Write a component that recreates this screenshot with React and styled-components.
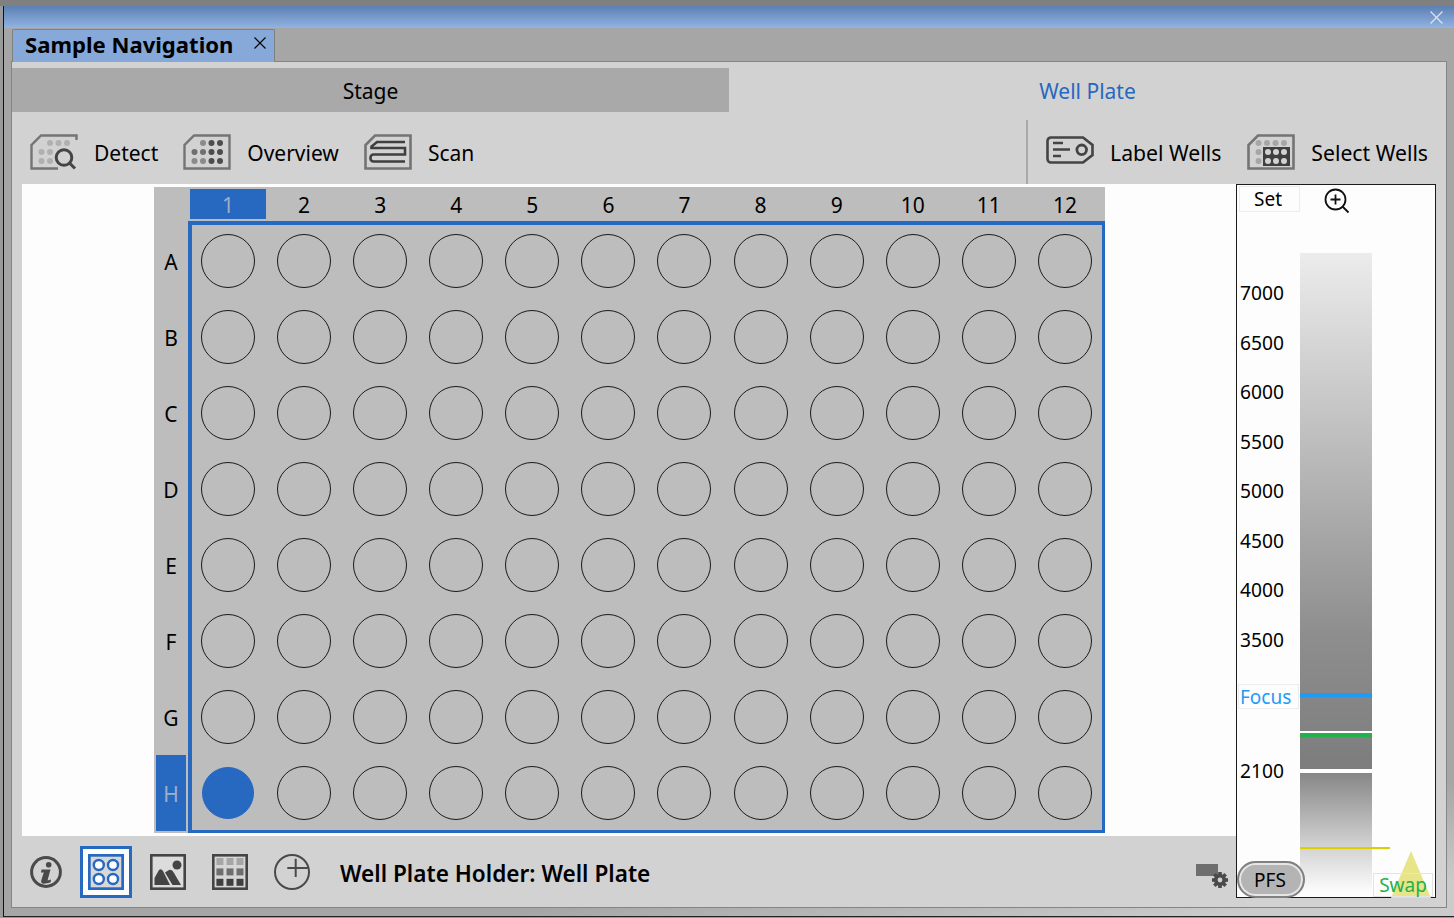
import React from "react";
import styled, { createGlobalStyle } from "styled-components";

const Global = createGlobalStyle`
  html, body { margin: 0; padding: 0; background: #808080; }
  * { box-sizing: border-box; }
  #root { width: 1454px; height: 918px; overflow: hidden; }
`;

const Screen = styled.div`
  width: 1454px; height: 918px; padding-top: 6px; padding-left: 3px;
  background: linear-gradient(#808080 6px, #9a9a9a 6px);
  font-family: "Noto Sans", "Open Sans", sans-serif;
  color: #000;
`;
const Win = styled.div`
  width: 1451px; height: 911px; display: flex; flex-direction: column;
  border-left: 1px solid #111; border-bottom: 1px solid #222;
  background: linear-gradient(172deg, #a6a6a6 88%, #cbcbcb 97%);
`;
const TitleBar = styled.div`
  height: 22px; flex: none; display: flex; justify-content: flex-end; align-items: center;
  padding-right: 11px;
  background: linear-gradient(#5d80b3, #91b3e2);
`;
const Dock = styled.div`
  flex: 1; display: flex; flex-direction: column; padding: 1px 7px 8px 7px;
`;
const TabStrip = styled.div`
  height: 32px; flex: none; display: flex; padding-left: 1px;
`;
const DocTab = styled.div`
  width: 263px; height: 33px; background: #86a9d9; border: 1px solid #808080; border-bottom: none;
  border-radius: 2px 2px 0 0; display: flex; align-items: center; justify-content: space-between;
  padding: 0 8px 4px 12px; font-size: 22.1px; font-weight: 700; position: relative; z-index: 1;
`;
const CloseMark = styled.span`
  display: flex; margin-bottom: 2px;
`;
const Panel = styled.div`
  flex: 1; display: flex; flex-direction: column; background: #d2d2d2;
  border: 1px solid #858585; padding-top: 6px;
`;
const ModeTabs = styled.div`
  height: 44px; flex: none; display: grid; grid-template-columns: 717px 1fr;
`;
const ModeTab = styled.div`
  display: flex; align-items: center; justify-content: center; font-size: 21px; padding-top: 2px;
  background: ${p => (p.$active ? "transparent" : "#a9a9a9")};
  color: ${p => (p.$active ? "#2668c0" : "#000")};
`;
const Toolbar = styled.div`
  height: 72px; flex: none; display: flex; justify-content: space-between; padding: 8px 18px 0 18px;
`;
const ToolGroup = styled.div`
  display: flex; align-items: center; gap: 25px; height: 64px; font-size: 21px;
`;
const RightTools = styled(ToolGroup)`
  border-left: 2px solid #aaaaaa; padding-left: 18px; gap: 26px; font-size: 21.2px;
`;
const Tool = styled.div`
  display: flex; align-items: center; gap: 16px; line-height: 1;
`;
const ToolText = styled.span`
  padding-top: 2px;
`;
const Work = styled.div`
  flex: 1; display: flex; padding-left: 10px; min-height: 0;
`;
const LeftCol = styled.div`
  width: 1214px; display: flex; flex-direction: column;
`;
const Canvas = styled.div`
  height: 652px; flex: none; background: #fdfdfd; display: flex; padding: 3px 0 0 132px;
`;
const Plate = styled.div`
  width: 951px; height: 646px; background: #bdbdbd; display: grid;
  grid-template-columns: 34px 917px; grid-template-rows: 34px 612px;
`;
const Corner = styled.div``;
const ColHead = styled.div`
  display: grid; grid-template-columns: repeat(12, 76.09px); padding: 2px 0 0 2px;
`;
const ColLabel = styled.div`
  display: flex; align-items: center; justify-content: center; font-size: 21px; height: 30px; padding-top: 2px;
  background: ${p => (p.$on ? "#2768c0" : "transparent")};
  color: ${p => (p.$on ? "#9eaec8" : "#000")};
`;
const RowHead = styled.div`
  display: grid; grid-template-rows: repeat(8, 76px); padding: 2px 0 0 2px;
`;
const RowLabel = styled.div`
  display: flex; align-items: center; justify-content: center; font-size: 21px; width: 30px; padding-top: 2px;
  background: ${p => (p.$on ? "#2768c0" : "transparent")};
  color: ${p => (p.$on ? "#9eaec8" : "#000")};
`;
const Wells = styled.div`
  border: 4px solid #2768c0; border-width: 4px 3px 3px 4px; display: grid;
  grid-template-columns: repeat(12, 76.09px); grid-template-rows: repeat(8, 76px);
`;
const WellCell = styled.div`
  display: flex; align-items: center; justify-content: center; padding: 0 4.1px 4px 0;
`;
const Well = styled.div`
  width: ${p => (p.$on ? 52 : 54)}px; height: ${p => (p.$on ? 52 : 54)}px; flex: none; border-radius: 50%;
  border: 1px solid ${p => (p.$on ? "#2768c0" : "#1a1a1a")};
  background: ${p => (p.$on ? "#2768c0" : "transparent")};
`;
const BottomBar = styled.div`
  flex: 1; display: flex; align-items: center; padding-left: 8px; position: relative;
`;
const BarIcon = styled.div`
  display: flex; flex: none; margin-right: ${p => p.$gap}px;
`;
const SelectedIcon = styled(BarIcon)`
  width: 52px; height: 52px; align-items: center; justify-content: center;
  background: #fdfdfd; border: 3px solid #2768c0;
`;
const Holder = styled.div`
  font-size: 22.6px; font-weight: 600; padding-top: 4px; color: #000;
`;
const GearWrap = styled.div`
  position: absolute; left: 1174px; top: 28px; width: 34px; height: 26px; display: flex;
`;
const Gauge = styled.div`
  width: 200px; height: 714px; flex: none; background: #fdfdfd; border: 1px solid #1c1c1c; position: relative;
`;
const SetBtn = styled.div`
  position: absolute; left: 2px; top: 1px; width: 61px; height: 26px; background: #fdfdfd; border: 1px solid #ececec;
  display: flex; align-items: center; justify-content: center; font-size: 19px; padding-right: 3px;
`;
const Zoom = styled.div`
  position: absolute; left: 87px; top: 3px; width: 26px; height: 26px; display: flex;
`;
const Bar = styled.div`
  position: absolute; left: 63px; top: 68px; width: 72px; height: 644px;
  background: linear-gradient(#ececec 0, #8e8e8e 380px, #7d7d7d 516px, #fff 516px, #fff 520px, #878787 520px, #cfcfcf 590px, #fdfdfd 640px);
`;
const Ticks = styled.div`
  position: absolute; left: 3px; top: 83px; display: flex; flex-direction: column; font-size: 19.2px;
`;
const Tick = styled.div`
  height: 49.5px; line-height: 49.5px;
`;
const Mark = styled.div`
  position: absolute; left: 63px; top: ${p => p.$top}px; width: ${p => p.$w || 72}px; height: ${p => p.$h}px; background: ${p => p.$c};
`;
const LowTick = styled.div`
  position: absolute; left: 3px; top: 572px; font-size: 19.2px; line-height: 28px;
`;
const FocusBox = styled.div`
  position: absolute; left: 1px; top: 499px; width: 61px; height: 25px; border: 1px solid #ececec; background: #fdfdfd;
  color: #1e9bf5; font-size: 19px; line-height: 25px; padding-left: 1px;
`;
const SwapBox = styled.div`
  position: absolute; left: 136px; top: 688px; width: 60px; height: 24px; border: 1px solid #e4e4e4;
  color: #22b14c; font-size: 19px; line-height: 22px; text-align: center;
`;
const Tri = styled.svg`
  position: absolute; left: 154px; top: 666px;
`;
const Pfs = styled.div`
  position: absolute; left: 0; top: 676px; width: 68px; height: 37px; border-radius: 19px;
  background: #b4b4b4; border: 2px solid #808080; box-shadow: inset 0 0 0 2px #e6e6e6;
  display: flex; align-items: center; justify-content: center; font-size: 19px; padding-right: 2px;
`;
const LabelSvg = styled.svg`
  margin-bottom: 4px;
`;

const X = ({ c = "#000", s = 12 }) => (
  <svg width={s} height={s} viewBox="0 0 12 12"><path d="M.5.5l11 11M11.5.5l-11 11" stroke={c} strokeWidth="1.1" fill="none" /></svg>
);
const dots = (xs, ys, r, fill) => ys.flatMap(y => xs.map(x => <circle key={x + "-" + y} cx={x} cy={y} r={r} fill={fill} />));
const plateD = "M11 1.5H46.5V34.5H1.5V11Z";
const DetectIcon = () => (
  <svg width="48" height="36" viewBox="0 0 48 36">
    <path d="M46.5 6V1.5H11L1.5 11V34.5H28" fill="none" stroke="#747474" strokeWidth="2.4" />
    {dots([20, 28.5, 37], [9], 3, "#b0b0b0")}
    {dots([11.5, 20], [18, 27], 3, "#b0b0b0")}
    <circle cx="34" cy="23.5" r="7.8" fill="#d2d2d2" stroke="#444" strokeWidth="3" />
    <path d="M40 29.5l5 5" stroke="#444" strokeWidth="3" />
  </svg>
);
const OverviewIcon = () => (
  <svg width="48" height="36" viewBox="0 0 48 36">
    <path d={plateD} fill="none" stroke="#747474" strokeWidth="2.4" />
    {dots([20], [9], 3, "#8a8a8a")}{dots([28.5, 37], [9], 3, "#4d4d4d")}
    {dots([11.5, 20], [18], 3, "#6f6f6f")}{dots([28.5, 37], [18], 3, "#4d4d4d")}
    {dots([11.5, 20], [27], 3, "#8a8a8a")}{dots([28.5, 37], [27], 3, "#4d4d4d")}
  </svg>
);
const ScanIcon = () => (
  <svg width="48" height="36" viewBox="0 0 48 36">
    <path d={plateD} fill="none" stroke="#747474" strokeWidth="2.6" />
    <path d="M41 8H13L7.5 12.5V14H41V20.5H9.5A3 3 0 0 0 6.5 23.5V24.5A3 3 0 0 0 9.5 27.5H41" fill="none" stroke="#3f3f3f" strokeWidth="2.6" />
  </svg>
);
const LabelIcon = () => (
  <LabelSvg width="48" height="28" viewBox="0 0 48 28">
    <path d="M5 1.5H37L46.5 9V19L37 26.5H5A3.5 3.5 0 0 1 1.5 23V5A3.5 3.5 0 0 1 5 1.5Z" fill="none" stroke="#444" strokeWidth="2.6" />
    <path d="M7 7H17M7 13.5H24M7 20H15" stroke="#444" strokeWidth="2.6" />
    <circle cx="35.7" cy="13.8" r="4.8" fill="none" stroke="#444" strokeWidth="2.8" />
  </LabelSvg>
);
const SelectIcon = () => (
  <svg width="48" height="36" viewBox="0 0 48 36">
    <path d={plateD} fill="none" stroke="#747474" strokeWidth="2.6" />
    {dots([11.5, 20, 28.5, 37], [9], 3, "#a6a6a6")}
    {dots([11.5], [18, 27], 3, "#a6a6a6")}
    <rect x="16" y="13" width="27" height="19" fill="#3f3f3f" />
    {dots([21, 29, 37], [18, 27], 3, "#d2d2d2")}
  </svg>
);
const InfoIcon = () => (
  <svg width="32" height="32" viewBox="0 0 32 32">
    <circle cx="16" cy="16" r="14.4" fill="none" stroke="#4a4a4a" strokeWidth="3" />
    <circle cx="18.7" cy="8.7" r="2.8" fill="#4a4a4a" />
    <path d="M11.5 13.5H20.5L17.5 24.5L21 23.5L20.5 26.5Q15 28 12.5 27.5Q10.5 27 11.5 23.5L13.8 16.5L11 16.5Z" fill="#4a4a4a" />
  </svg>
);
const WellsIcon = () => (
  <svg width="36" height="36" viewBox="0 0 36 36">
    <rect x="1.3" y="1.3" width="33.4" height="33.4" fill="#d8d8d8" stroke="#2768c0" strokeWidth="2.8" />
    {[11, 25].flatMap(y => [10.8, 25].map(x => <circle key={x + "_" + y} cx={x} cy={y} r="5" fill="#fdfdfd" stroke="#2768c0" strokeWidth="2.4" />))}
  </svg>
);
const ImageIcon = () => (
  <svg width="36" height="36" viewBox="0 0 36 36">
    <rect x="1.3" y="1.3" width="33.4" height="33.4" fill="#dcdcdc" stroke="#444" strokeWidth="2.6" />
    <circle cx="27" cy="11" r="4.5" fill="#444" />
    <path d="M4.5 31V24L9 16Q11 14 13 17L20 31Z" fill="#444" />
    <path d="M15 18.5L19 16Q22 15 24 19L31 31H22.5Z" fill="#444" />
  </svg>
);
const GridIcon = () => {
  const cs = ["#a6a6a6", "#6e6e6e", "#3f3f3f"];
  return (
    <svg width="36" height="36" viewBox="0 0 36 36">
      <rect x="1.3" y="1.3" width="33.4" height="33.4" fill="#d6d6d6" stroke="#444" strokeWidth="2.6" />
      {cs.flatMap((c, r) => [4.4, 14.5, 24.5].map(x => <rect key={x + c} x={x} y={4 + r * 10.4} width="7" height="7" fill={c} />))}
    </svg>
  );
};
const PlusIcon = () => (
  <svg width="36" height="36" viewBox="0 0 36 36">
    <circle cx="18" cy="18" r="17" fill="none" stroke="#4a4a4a" strokeWidth="2" />
    <path d="M21.7 4.7V23M13.3 14H34" stroke="#4a4a4a" strokeWidth="2" />
  </svg>
);
const Gear = () => (
  <svg width="34" height="26" viewBox="0 0 34 26">
    <rect x="0" y="0" width="22" height="12" fill="#6e6e6e" />
    {[0, 45, 90, 135].map(a => <rect key={a} x="22.2" y="8" width="3.6" height="16" fill="#4a4a4a" transform={`rotate(${a} 24 16)`} />)}
    <circle cx="24" cy="16" r="4.6" fill="none" stroke="#4a4a4a" strokeWidth="3" />
    <circle cx="24" cy="16" r="2.4" fill="#d2d2d2" />
  </svg>
);
const ZoomIcon = () => (
  <svg width="26" height="26" viewBox="0 0 26 26">
    <circle cx="11.5" cy="11.5" r="10" fill="none" stroke="#111" strokeWidth="1.8" />
    <path d="M11.5 6.5v10M6.5 11.5h10M18.5 18.5l6 6" stroke="#111" strokeWidth="1.8" />
  </svg>
);

const cols = Array.from({ length: 12 }, (_, i) => i + 1);
const rows = "ABCDEFGH".split("");
const ticks = [7000, 6500, 6000, 5500, 5000, 4500, 4000, 3500];

export default function App() {
  return (
    <Screen>
      <Global />
      <Win>
        <TitleBar><X c="#dfe5ee" s={13} /></TitleBar>
        <Dock>
          <TabStrip>
            <DocTab>Sample Navigation<CloseMark><X /></CloseMark></DocTab>
          </TabStrip>
          <Panel>
            <ModeTabs>
              <ModeTab>Stage</ModeTab>
              <ModeTab $active>Well Plate</ModeTab>
            </ModeTabs>
            <Toolbar>
              <ToolGroup>
                <Tool><DetectIcon /><ToolText>Detect</ToolText></Tool>
                <Tool><OverviewIcon /><ToolText>Overview</ToolText></Tool>
                <Tool><ScanIcon /><ToolText>Scan</ToolText></Tool>
              </ToolGroup>
              <RightTools>
                <Tool><LabelIcon /><ToolText>Label Wells</ToolText></Tool>
                <Tool><SelectIcon /><ToolText>Select Wells</ToolText></Tool>
              </RightTools>
            </Toolbar>
            <Work>
              <LeftCol>
                <Canvas>
                  <Plate>
                    <Corner />
                    <ColHead>{cols.map(c => <ColLabel key={c} $on={c === 1}>{c}</ColLabel>)}</ColHead>
                    <RowHead>{rows.map(r => <RowLabel key={r} $on={r === "H"}>{r}</RowLabel>)}</RowHead>
                    <Wells>
                      {rows.flatMap(r => cols.map(c => (
                        <WellCell key={r + c}><Well $on={r === "H" && c === 1} /></WellCell>
                      )))}
                    </Wells>
                  </Plate>
                </Canvas>
                <BottomBar>
                  <BarIcon $gap={18}><InfoIcon /></BarIcon>
                  <SelectedIcon $gap={18}><WellsIcon /></SelectedIcon>
                  <BarIcon $gap={26}><ImageIcon /></BarIcon>
                  <BarIcon $gap={26}><GridIcon /></BarIcon>
                  <BarIcon $gap={30}><PlusIcon /></BarIcon>
                  <Holder>Well Plate Holder: Well Plate</Holder>
                  <GearWrap><Gear /></GearWrap>
                </BottomBar>
              </LeftCol>
              <Gauge>
                <SetBtn>Set</SetBtn>
                <Zoom><ZoomIcon /></Zoom>
                <Bar />
                <Ticks>{ticks.map(t => <Tick key={t}>{t}</Tick>)}</Ticks>
                <LowTick>2100</LowTick>
                <Mark $top={508} $h={4} $c="#1e9bf5" />
                <Mark $top={546} $h={2} $c="#fdfdfd" />
                <Mark $top={548} $h={4} $c="#22b14c" />
                <Mark $top={662} $h={2} $w={90} $c="#dccf00" />
                <FocusBox>Focus</FocusBox>
                <Tri width="40" height="47" viewBox="0 0 40 47"><path d="M20 0L40 47H0Z" fill="#e8e48a" /></Tri>
                <SwapBox>Swap</SwapBox>
                <Pfs>PFS</Pfs>
              </Gauge>
            </Work>
          </Panel>
        </Dock>
      </Win>
    </Screen>
  );
}
